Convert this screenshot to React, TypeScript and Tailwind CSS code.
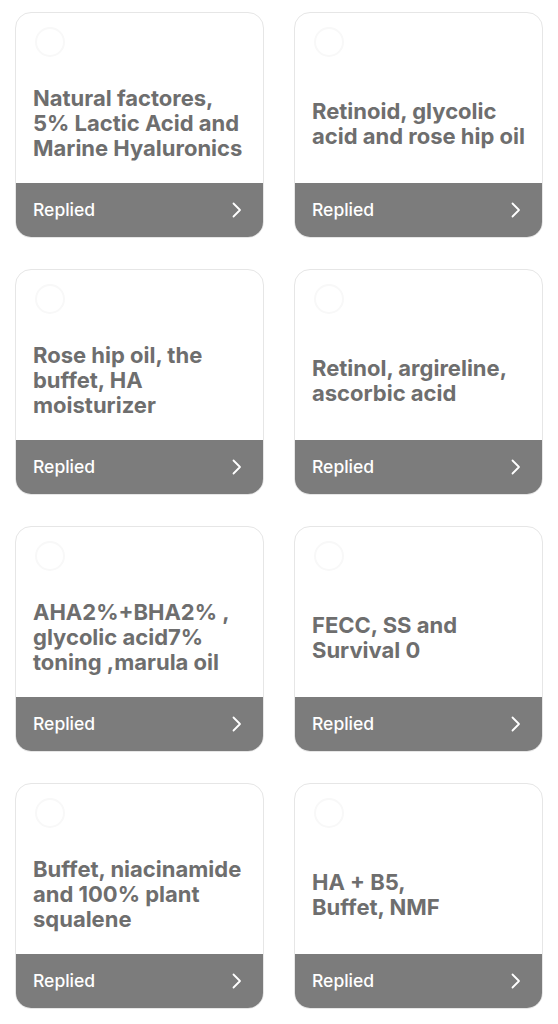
const items = [
  "Natural factores, 5% Lactic Acid and Marine Hyaluronics",
  "Retinoid, glycolic acid and rose hip oil",
  "Rose hip oil, the buffet, HA moisturizer",
  "Retinol, argireline, ascorbic acid",
  "AHA2%+BHA2% , glycolic acid7% toning ,marula oil",
  "FECC, SS and Survival 0",
  "Buffet, niacinamide and 100% plant squalene",
  "HA + B5,\nBuffet, NMF",
];

function Chevron() {
  return (
    <svg width="10" height="16" viewBox="0 0 10 16" fill="none" className="text-white">
      <polyline points="1.5,1.5 8,8 1.5,14.5" stroke="currentColor" strokeWidth="1.8" strokeLinecap="round" strokeLinejoin="round" />
    </svg>
  );
}

function RoutineCard({ title }: { title: string }) {
  return (
    <div className="flex h-[226px] flex-col overflow-hidden rounded-2xl border border-[#e6e6e6] bg-white">
      <div className="flex h-[51px] items-start px-[19px] pt-[14px]">
        <div className="h-[30px] w-[30px] rounded-full border-2 border-[#f8f8f8]" />
      </div>
      <div className="flex flex-1 items-center pl-[17px] pr-[10px]">
        <p className="whitespace-pre-line text-[22px] font-bold leading-[25px] text-[#6e6e6e]">{title}</p>
      </div>
      <div className="flex h-[54px] items-center justify-between bg-[#7c7c7c] pl-[17px] pr-[21px]">
        <span className="text-[17.5px] font-medium text-white">Replied</span>
        <Chevron />
      </div>
    </div>
  );
}

export default function App() {
  return (
    <div className="min-h-screen bg-white px-[15px] pt-[12px] font-['Inter',sans-serif]">
      <div className="grid grid-cols-2 gap-x-[30px] gap-y-[31px]">
        {items.map((t) => (
          <RoutineCard key={t} title={t} />
        ))}
      </div>
    </div>
  );
}
